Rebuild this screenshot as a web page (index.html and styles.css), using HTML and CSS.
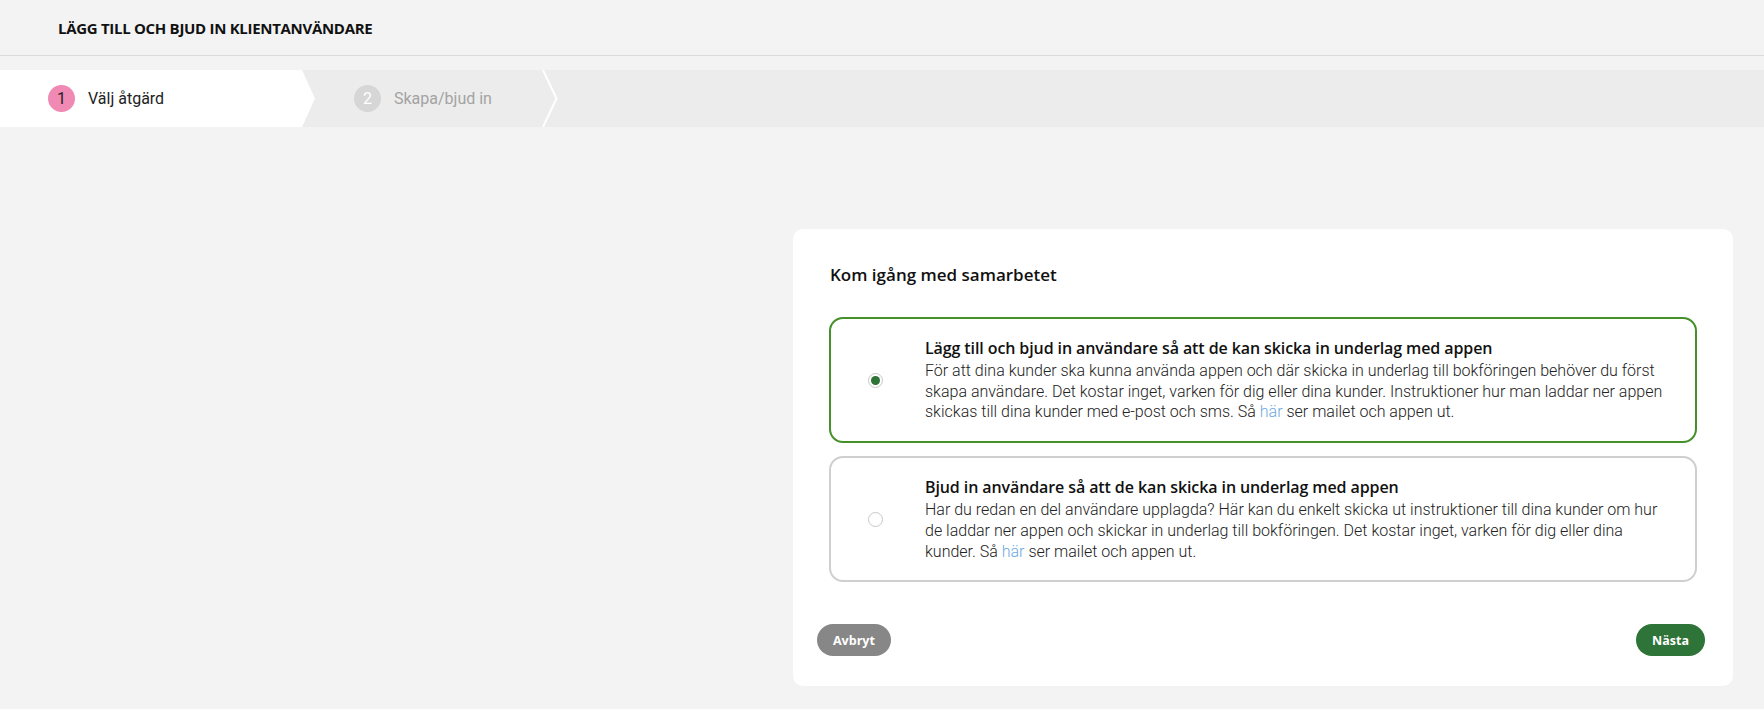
FILE: index.html
```html
<!DOCTYPE html>
<html lang="sv">
<head>
  <meta charset="UTF-8">
  <meta name="viewport" content="width=device-width, initial-scale=1.0">
  <title>Lägg till och bjud in klientanvändare</title>
  <link rel="stylesheet" href="styles.css">
</head>
<body>

  <header class="page-header">
    <h1>Lägg till och bjud in klientanvändare</h1>
  </header>

  <nav class="steps">
    <div class="step step-active">
      <span class="step-num">1</span>
      <span class="step-label">Välj åtgärd</span>
    </div>
    <div class="step step-next">
      <span class="step-num">2</span>
      <span class="step-label">Skapa/bjud in</span>
      <svg class="step-chevron" width="16" height="57" viewBox="0 0 16 57">
        <polyline points="1,0 14.5,28.5 1,57" fill="none" stroke="#fff" stroke-width="2"/>
      </svg>
    </div>
  </nav>

  <main class="content">
    <section class="card">
      <h2>Kom igång med samarbetet</h2>

      <label class="option option-selected">
        <span class="radio"><span class="radio-dot"></span></span>
        <span class="option-text">
          <strong>Lägg till och bjud in användare så att de kan skicka in underlag med appen</strong>
          <span class="option-desc">För att dina kunder ska kunna använda appen och där skicka in underlag till bokföringen behöver du först skapa användare. Det kostar inget, varken för dig eller dina kunder. Instruktioner hur man laddar ner appen skickas till dina kunder med e-post och sms. Så <a href="#">här</a> ser mailet och appen ut.</span>
        </span>
      </label>

      <label class="option">
        <span class="radio"></span>
        <span class="option-text">
          <strong>Bjud in användare så att de kan skicka in underlag med appen</strong>
          <span class="option-desc">Har du redan en del användare upplagda? Här kan du enkelt skicka ut instruktioner till dina kunder om hur de laddar ner appen och skickar in underlag till bokföringen. Det kostar inget, varken för dig eller dina kunder. Så <a href="#">här</a> ser mailet och appen ut.</span>
        </span>
      </label>

      <div class="actions">
        <button class="btn btn-cancel">Avbryt</button>
        <button class="btn btn-next">Nästa</button>
      </div>
    </section>
  </main>

</body>
</html>
```

FILE: styles.css
```css
body {
  font-family: 'Roboto', sans-serif;
  background: #f3f3f3;
  color: #222;
  margin: 0;
  padding: 0;
}

.page-header {
  height: 55px;
  border-bottom: 1px solid #dcdcdc;
  display: flex;
  align-items: center;
  padding-left: 58px;
}

.page-header h1 {
  margin: 0;
  font-family: 'Open Sans', sans-serif;
  font-size: 15px;
  font-weight: 700;
  text-transform: uppercase;
  letter-spacing: -0.3px;
  color: #111;
}

/* stegindikator */
.steps {
  margin-top: 14px;
  height: 57px;
  background: #ececec;
  display: flex;
  align-items: stretch;
}

.step {
  display: flex;
  align-items: center;
  font-size: 16px;
}

.step-num {
  width: 27px;
  height: 27px;
  border-radius: 50%;
  display: flex;
  align-items: center;
  justify-content: center;
  font-size: 16px;
}

.step-label {
  margin-left: 13px;
}

.step-active {
  width: 315px;
  box-sizing: border-box;
  padding-left: 48px;
  background: #fff;
  clip-path: polygon(0 0, 302px 0, 315px 50%, 302px 100%, 0 100%);
}

.step-active .step-num {
  background: #f08ab4;
  color: #222;
}

.step-next {
  margin-left: 39px;
  color: #a3a3a3;
}

.step-next .step-num {
  background: #d6d6d6;
  color: #fff;
}

.step-chevron {
  margin-left: 50px;
}

/* innehåll */
.content {
  display: flex;
  justify-content: flex-end;
  padding: 102px 31px 0 0;
}

.card {
  width: 940px;
  box-sizing: border-box;
  background: #fff;
  border-radius: 10px;
  padding: 34px 36px 30px;
}

.card h2 {
  margin: 0 0 30px 1px;
  font-family: 'Open Sans', sans-serif;
  font-size: 17px;
  font-weight: 600;
  line-height: 24px;
  color: #111;
}

.option {
  display: flex;
  align-items: center;
  border: 2px solid #cfcfcf;
  border-radius: 14px;
  padding: 19px 28px 18px 0;
  margin-bottom: 13px;
  cursor: pointer;
}

.option-selected {
  border-color: #439128;
}

.radio {
  flex: none;
  width: 13px;
  height: 13px;
  border: 1px solid #c8c8c8;
  border-radius: 50%;
  margin: 0 42px 0 37px;
  display: flex;
  align-items: center;
  justify-content: center;
}

.radio-dot {
  width: 9px;
  height: 9px;
  border-radius: 50%;
  background: #2e7337;
}

.option-text {
  display: flex;
  flex-direction: column;
  gap: 2px;
}

.option-text strong {
  font-family: 'Open Sans', sans-serif;
  font-size: 16px;
  font-weight: 600;
  line-height: 21px;
  letter-spacing: -0.1px;
  color: #111;
}

.option-desc {
  font-size: 16px;
  font-weight: 300;
  line-height: 20.7px;
  color: #222;
}

.option-desc a {
  color: #6aa8e0;
  text-decoration: none;
}

.actions {
  display: flex;
  justify-content: space-between;
  margin: 42px -8px 0 -12px;
}

.btn {
  height: 32px;
  padding: 0 16px;
  border: none;
  border-radius: 16px;
  color: #fff;
  font-family: 'Open Sans', sans-serif;
  font-size: 12.5px;
  font-weight: 700;
  cursor: pointer;
}

.btn-cancel {
  background: #878787;
}

.btn-next {
  background: #2e7337;
}
```
